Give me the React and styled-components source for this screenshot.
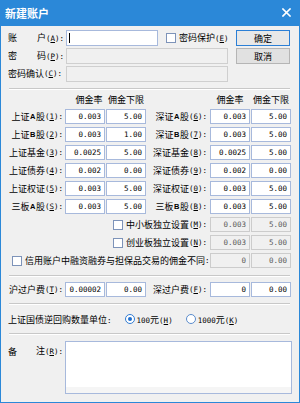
import React from 'react';
import styled, { createGlobalStyle } from 'styled-components';

const CJK = `"Noto Sans CJK SC", "Noto Sans", sans-serif`;
const MONO = `"DejaVu Sans Mono", "Liberation Mono", monospace`;

const Global = createGlobalStyle`
  html, body { margin: 0; padding: 0; background: #ffffff; }
  body { font-family: ${CJK}; }
  * { box-sizing: border-box; }
`;

const Window = styled.div`
  width: 300px;
  height: 403px;
  display: flex;
  flex-direction: column;
  background: #2b88d8;
`;

const TitleBar = styled.div`
  height: 26px;
  flex: none;
  display: flex;
  align-items: center;
  justify-content: space-between;
  padding: 0 9px 1px 5px;
  color: #ffffff;
  font-size: 11px;
  font-weight: 700;
`;

const Body = styled.div`
  flex: 1;
  margin: 0 1px 1px;
  background: #f0f0f0;
  padding: 4px 7px 0 7px;
  font-size: 9px;
  color: #000;
  display: flex;
  flex-direction: column;
`;

const Top = styled.div`
  display: flex;
  justify-content: space-between;
`;

const TopForm = styled.div`
  display: flex;
  flex-direction: column;
  gap: 2px;
`;

const FormRow = styled.div`
  display: flex;
  align-items: center;
  height: 16px;
`;

const FieldLabel = styled.div`
  width: 58px;
  flex: none;
  display: flex;
  justify-content: ${p => (p.$spread ? 'space-between' : 'flex-start')};
  align-items: center;
  padding-right: 2px;
  white-space: nowrap;
  line-height: 16px;
`;

const TextBox = styled.div`
  width: ${p => p.$w}px;
  height: 16px;
  border: 1px solid ${p => (p.$disabled ? '#cfcfcf' : '#a7b9dc')};
  background: ${p => (p.$disabled ? '#f0f0f0' : '#ffffff')};
  display: flex;
  align-items: center;
  padding-left: 2px;
`;

const Caret = styled.span`
  width: 1px;
  height: 10px;
  background: #000;
`;

const Check = styled.span`
  width: 10px;
  height: 10px;
  flex: none;
  border: 1px solid #7d93b9;
  background: #ffffff;
  margin-left: ${p => p.$ml || 0}px;
  margin-right: ${p => p.$mr || 0}px;
`;

const CheckText = styled.span`
  white-space: nowrap;
  line-height: 16px;
`;

const Buttons = styled.div`
  display: flex;
  flex-direction: column;
  gap: 2px;
  margin-right: 2px;
`;

const Button = styled.div`
  width: 54px;
  height: 16px;
  display: flex;
  align-items: center;
  justify-content: center;
  font-size: 9px;
  background: ${p => (p.$default ? '#e8e8e8' : '#e1e1e1')};
  border: 1px solid ${p => (p.$default ? '#2b7fd6' : '#b5b5b5')};
`;

const Sep = styled.div`
  height: 2px;
  border-top: 1px solid #c8c8c8;
  border-bottom: 1px solid #ffffff;
  margin: ${p => p.$mt}px 2px 0 1px;
`;

const Grid = styled.div`
  display: grid;
  grid-template-columns: 57px 41px 41px 63px 41px 40px;
  grid-template-rows: ${p => p.$rows};
  row-gap: 3px;
  align-items: center;
  margin-top: ${p => p.$mt}px;
`;

const Head = styled.div`
  text-align: center;
  padding-left: ${p => p.$shift || 0}px;
  width: 40px;
  line-height: 12px;
  white-space: nowrap;
`;

const CellLabel = styled.div`
  display: flex;
  justify-content: flex-end;
  align-items: center;
  padding-right: ${p => p.$pr}px;
  white-space: nowrap;
  line-height: 15px;
`;

const SpanCell = styled.div`
  grid-column: 1 / 5;
  display: flex;
  align-items: center;
  justify-content: ${p => (p.$start ? 'flex-start' : 'flex-end')};
  padding-right: 3px;
  white-space: nowrap;
  line-height: 15px;
`;

const NumBox = styled.div`
  width: 40px;
  height: 15px;
  border: 1px solid ${p => (p.$disabled ? '#cccccc' : '#a7b9dc')};
  background: ${p => (p.$disabled ? '#f0f0f0' : '#ffffff')};
  color: ${p => (p.$disabled ? '#5a5a5a' : '#000000')};
  font-family: ${MONO};
  font-size: 7.5px;
  line-height: 13px;
  text-align: right;
  padding-right: 3px;
  white-space: nowrap;
`;

const Key = styled.span`
  font-family: ${MONO};
  font-size: 7.5px;
`;

const Latin = styled.span`
  font-family: "Liberation Sans", Arial, sans-serif;
  font-size: 7.5px;
  font-weight: 700;
  margin: 0 0.5px;
`;

const RadioRow = styled.div`
  display: flex;
  align-items: center;
  height: 14px;
  margin-top: 7px;
  white-space: nowrap;
`;

const RadioGroup = styled.div`
  display: flex;
  align-items: center;
  margin-left: 13px;
`;

const RadioItem = styled.div`
  display: flex;
  align-items: center;
  margin-right: 13px;
`;

const RadioDot = styled.span`
  width: 10px;
  height: 10px;
  border-radius: 50%;
  border: 1px solid ${p => (p.$on ? '#2f7bd3' : '#5a8ccc')};
  background: #ffffff;
  display: flex;
  align-items: center;
  justify-content: center;
  margin-right: 2px;
  &::after {
    content: '';
    width: 4px;
    height: 4px;
    border-radius: 50%;
    background: ${p => (p.$on ? '#1f6fce' : 'transparent')};
  }
`;

const RemarkRow = styled.div`
  display: flex;
  align-items: flex-start;
  margin-top: 6px;
`;

const RemarkLabel = styled(FieldLabel)`
  width: 57px;
  margin-top: 2px;
`;

const TextArea = styled.div`
  width: 227px;
  height: 53px;
  border: 1px solid #a7b9dc;
  background: #ffffff;
  display: flex;
  flex-direction: column;
  justify-content: flex-end;
  &::after {
    content: '';
    height: 6px;
    background: #f5f5f5;
  }
`;

const Mn = ({ k, colon = true }) => (
  <Key>
    (<u>{k}</u>){colon ? ':' : ''}
  </Key>
);

const CloseIcon = () => (
  <svg width="9" height="9" viewBox="0 0 9 9">
    <path d="M1 1 L8 8 M8 1 L1 8" stroke="#ffffff" strokeWidth="1.6" strokeLinecap="square" />
  </svg>
);

const Name = ({ a, b, c, k }) => (
  <>
    {a}
    {b && <Latin>{b}</Latin>}
    {c}
    <Mn k={k} />
  </>
);

const left = [
  ['上证', 'A', '股', '1', '0.003', '5.00'],
  ['上证', 'B', '股', '2', '0.003', '1.00'],
  ['上证基金', '', '', '3', '0.0025', '5.00'],
  ['上证债券', '', '', '4', '0.002', '0.00'],
  ['上证权证', '', '', '5', '0.003', '5.00'],
  ['三板', 'A', '股', 'S', '0.003', '5.00'],
];

const right = [
  ['深证', 'A', '股', '6', '0.003', '5.00'],
  ['深证', 'B', '股', '7', '0.003', '5.00'],
  ['深证基金', '', '', '8', '0.0025', '5.00'],
  ['深证债券', '', '', '9', '0.002', '0.00'],
  ['深证权证', '', '', '0', '0.003', '5.00'],
  ['三板', 'B', '股', 'B', '0.003', '5.00'],
];

export default function App() {
  return (
    <>
      <Global />
      <Window>
        <TitleBar>
          <span>新建账户</span>
          <CloseIcon />
        </TitleBar>
        <Body>
          <Top>
            <TopForm>
              <FormRow>
                <FieldLabel $spread>
                  <span>账</span>
                  <span>
                    户<Mn k="A" />
                  </span>
                </FieldLabel>
                <TextBox $w={92}>
                  <Caret />
                </TextBox>
                <Check $ml={8} $mr={3} />
                <CheckText>
                  密码保护<Mn k="E" colon={false} />
                </CheckText>
              </FormRow>
              <FormRow>
                <FieldLabel $spread>
                  <span>密</span>
                  <span>
                    码<Mn k="P" />
                  </span>
                </FieldLabel>
                <TextBox $w={162} $disabled />
              </FormRow>
              <FormRow>
                <FieldLabel>
                  密码确认<Mn k="C" />
                </FieldLabel>
                <TextBox $w={162} $disabled />
              </FormRow>
            </TopForm>
            <Buttons>
              <Button $default>确定</Button>
              <Button>取消</Button>
            </Buttons>
          </Top>

          <Sep $mt={6} />

          <Grid $mt={4} $rows="12px repeat(9, 15px)">
            <span />
            <Head $shift={8}>佣金率</Head>
            <Head>佣金下限</Head>
            <span />
            <Head>佣金率</Head>
            <Head>佣金下限</Head>
            {left.map((l, i) => {
              const r = right[i];
              return (
                <React.Fragment key={i}>
                  <CellLabel $pr={2}>
                    <Name a={l[0]} b={l[1]} c={l[2]} k={l[3]} />
                  </CellLabel>
                  <NumBox>{l[4]}</NumBox>
                  <NumBox>{l[5]}</NumBox>
                  <CellLabel $pr={3}>
                    <Name a={r[0]} b={r[1]} c={r[2]} k={r[3]} />
                  </CellLabel>
                  <NumBox>{r[4]}</NumBox>
                  <NumBox>{r[5]}</NumBox>
                </React.Fragment>
              );
            })}
            <SpanCell>
              <Check $mr={3} />
              中小板独立设置<Mn k="M" />
            </SpanCell>
            <NumBox $disabled>0.003</NumBox>
            <NumBox $disabled>5.00</NumBox>
            <SpanCell>
              <Check $mr={3} />
              创业板独立设置<Mn k="N" />
            </SpanCell>
            <NumBox $disabled>0.003</NumBox>
            <NumBox $disabled>5.00</NumBox>
            <SpanCell $start>
              <Check $ml={4} $mr={3} />
              信用账户中融资融券与担保品交易的佣金不同<Key>:</Key>
            </SpanCell>
            <NumBox $disabled>0</NumBox>
            <NumBox $disabled>0.00</NumBox>
          </Grid>

          <Sep $mt={7} />

          <Grid $mt={5} $rows="15px">
            <CellLabel $pr={2}>
              沪过户费<Mn k="T" />
            </CellLabel>
            <NumBox>0.00002</NumBox>
            <NumBox>0.00</NumBox>
            <CellLabel $pr={3}>
              深过户费<Mn k="F" />
            </CellLabel>
            <NumBox>0</NumBox>
            <NumBox>0.00</NumBox>
          </Grid>

          <Sep $mt={6} />

          <RadioRow>
            <span>
              上证国债逆回购数量单位<Key>:</Key>
            </span>
            <RadioGroup>
              <RadioItem>
                <RadioDot $on />
                <span>
                  <Key>100</Key>元<Mn k="H" colon={false} />
                </span>
              </RadioItem>
              <RadioItem>
                <RadioDot />
                <span>
                  <Key>1000</Key>元<Mn k="K" colon={false} />
                </span>
              </RadioItem>
            </RadioGroup>
          </RadioRow>

          <Sep $mt={7} />

          <RemarkRow>
            <RemarkLabel $spread>
              <span>备</span>
              <span>
                注<Mn k="R" />
              </span>
            </RemarkLabel>
            <TextArea />
          </RemarkRow>
        </Body>
      </Window>
    </>
  );
}
